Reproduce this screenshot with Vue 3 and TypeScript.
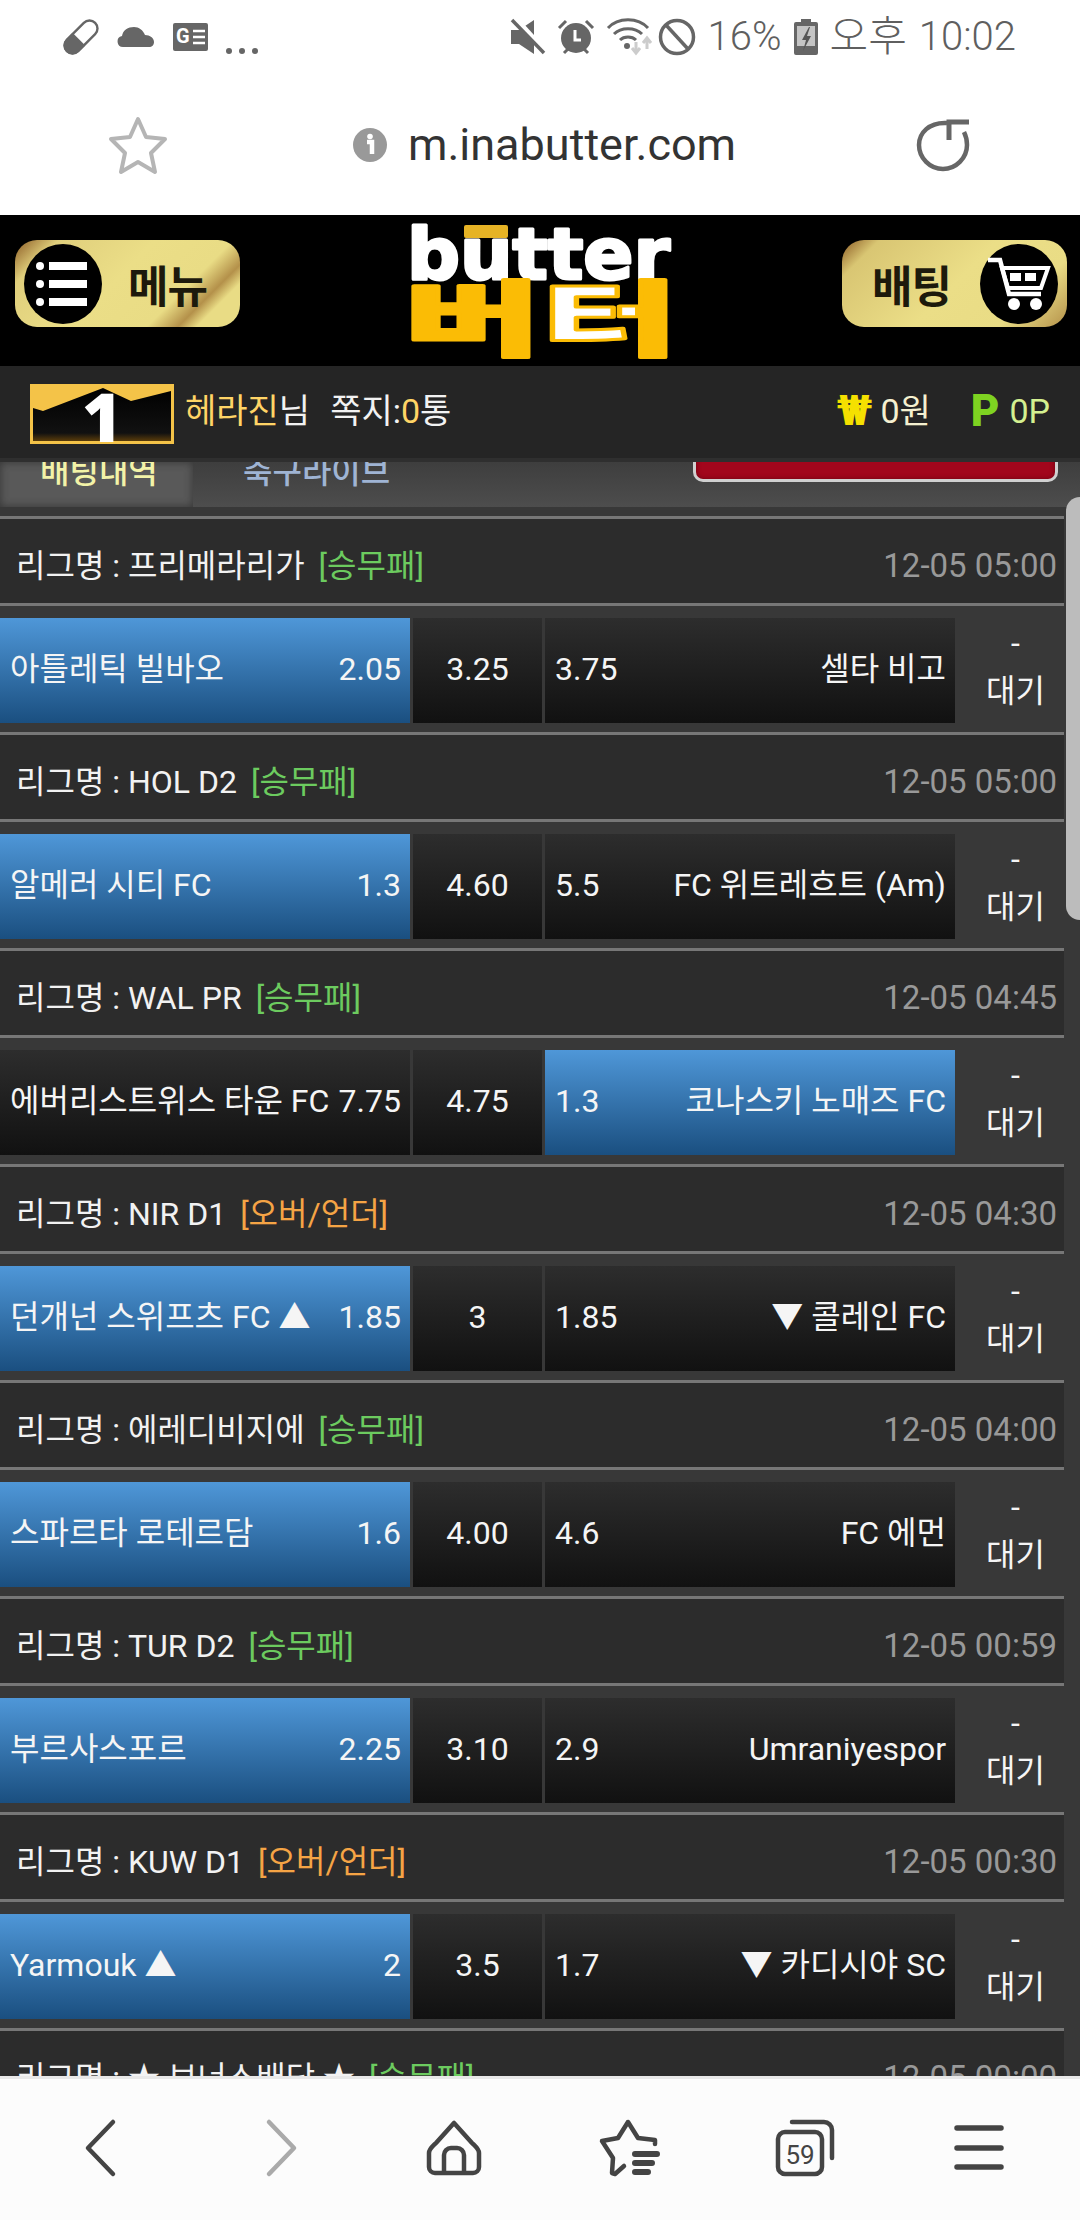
<script setup lang="ts">
interface Game {
  league: string;
  kind: string;
  time: string;
  home: string;
  homeOdds: string;
  draw: string;
  awayOdds: string;
  away: string;
  picked: 'home' | 'away';
}

const games: Game[] = [
  { league: '프리메라리가', kind: '승무패', time: '12-05 05:00', home: '아틀레틱 빌바오', homeOdds: '2.05', draw: '3.25', awayOdds: '3.75', away: '셀타 비고', picked: 'home' },
  { league: 'HOL D2', kind: '승무패', time: '12-05 05:00', home: '알메러 시티 FC', homeOdds: '1.3', draw: '4.60', awayOdds: '5.5', away: 'FC 위트레흐트 (Am)', picked: 'home' },
  { league: 'WAL PR', kind: '승무패', time: '12-05 04:45', home: '에버리스트위스 타운 FC', homeOdds: '7.75', draw: '4.75', awayOdds: '1.3', away: '코나스키 노매즈 FC', picked: 'away' },
  { league: 'NIR D1', kind: '오버/언더', time: '12-05 04:30', home: '던개넌 스위프츠 FC ▲', homeOdds: '1.85', draw: '3', awayOdds: '1.85', away: '▼ 콜레인 FC', picked: 'home' },
  { league: '에레디비지에', kind: '승무패', time: '12-05 04:00', home: '스파르타 로테르담', homeOdds: '1.6', draw: '4.00', awayOdds: '4.6', away: 'FC 에먼', picked: 'home' },
  { league: 'TUR D2', kind: '승무패', time: '12-05 00:59', home: '부르사스포르', homeOdds: '2.25', draw: '3.10', awayOdds: '2.9', away: 'Umraniyespor', picked: 'home' },
  { league: 'KUW D1', kind: '오버/언더', time: '12-05 00:30', home: 'Yarmouk ▲', homeOdds: '2', draw: '3.5', awayOdds: '1.7', away: '▼ 카디시야 SC', picked: 'home' },
  { league: '★ 보너스배당 ★', kind: '승무패', time: '12-05 00:00', home: '', homeOdds: '', draw: '', awayOdds: '', away: '', picked: 'home' },
];
</script>

<template>
  <div class="phone">
    <div class="status-bar">
      <div class="status-left">
        <svg width="36" height="36" viewBox="0 0 36 36">
          <g transform="rotate(-45 18 18)">
            <rect x="-2" y="10" width="40" height="16" rx="8" fill="none" stroke="#666" stroke-width="2.400" />
            <path d="M15 9H6a9 9 0 0 0 0 18h9z" fill="#666" />
          </g>
        </svg>
        <svg width="38" height="22" viewBox="0 0 38 22">
          <path d="M6 21a5.500 5.500 0 0 1-1-10.900C6 4 11 1 17 1c5 0 9 3 11 8 5 0 9 3 9 7 0 3-2 5-5 5z" fill="#666" />
        </svg>
        <svg width="35" height="28" viewBox="0 0 35 28">
          <rect width="35" height="28" rx="2" fill="#666" />
          <text x="3" y="20" class="news-g">G</text>
          <path d="M20 8h12M20 14h12M20 20h12" stroke="#fff" stroke-width="2.500" />
        </svg>
        <span class="more-dots"><i></i><i></i><i></i></span>
      </div>
      <div class="status-right">
        <svg width="35" height="36" viewBox="0 0 35 36">
          <path d="M0 11h8L23 1v34L8 25H0z" fill="#666" />
          <path d="M5 0l30 33" stroke="#fff" stroke-width="5" />
          <path d="M1 1l32 33" stroke="#666" stroke-width="3.500" />
        </svg>
        <svg width="36" height="36" viewBox="0 0 36 36">
          <circle cx="18" cy="19" r="15" fill="#666" />
          <path d="M17 11v10h6" stroke="#fff" stroke-width="3" fill="none" />
          <path d="M1 9l7-7M35 9l-7-7M6 34l4-4M30 34l-4-4" stroke="#666" stroke-width="3" />
        </svg>
        <svg class="wifi" width="48" height="38" viewBox="0 0 48 38">
          <path d="M2 10c10-11 30-11 40 0M8 16c7-7 21-7 28 0M14 22c4-4 12-4 16 0" fill="none" stroke="#666" stroke-width="3" />
          <circle cx="21" cy="28" r="3" fill="#666" />
          <path d="M30 24v10M26 30l4 5 4-5" fill="none" stroke="#ccc" stroke-width="3" />
          <path d="M41 31V20M37 25l4-5 4 5" fill="none" stroke="#ccc" stroke-width="3" />
        </svg>
        <svg width="38" height="38" viewBox="0 0 38 38">
          <circle cx="19" cy="19" r="16.500" fill="none" stroke="#666" stroke-width="3.500" />
          <path d="M8 7l22 24" stroke="#666" stroke-width="3.500" />
        </svg>
        <span class="status-text">16%</span>
        <svg width="24" height="36" viewBox="0 0 24 36">
          <path d="M7 0h10v3h5a2 2 0 0 1 2 2v29a2 2 0 0 1-2 2H2a2 2 0 0 1-2-2V5a2 2 0 0 1 2-2h5z" fill="#666" />
          <rect x="3" y="7" width="18" height="20" fill="#c4c4c4" />
          <path d="M15 8l-7 13h4l-3 11 8-15h-4l3-9z" fill="#555" />
        </svg>
        <span class="status-text ko">오후</span>
        <span class="status-text">10:02</span>
      </div>
    </div>

    <div class="address-bar">
      <svg width="60" height="58" viewBox="0 0 60 58">
        <path d="M30 3l8 18 19 2-14 14 4 19-17-10-17 10 4-19L3 23l19-2z" fill="none" stroke="#b5b5b5" stroke-width="4" stroke-linejoin="round" />
      </svg>
      <div class="url">
        <svg width="34" height="34" viewBox="0 0 34 34">
          <circle cx="17" cy="17" r="17" fill="#999" />
          <path d="M14 14h5v12" fill="none" stroke="#fff" stroke-width="4.500" />
          <circle cx="17" cy="8.500" r="2.800" fill="#fff" />
        </svg>
        <span>m.inabutter.com</span>
      </div>
      <svg class="reload" width="54" height="54" viewBox="0 0 54 54">
        <path d="M31 5C13 4 3 15 3 27c0 13 11 24 24 24s24-11 24-24c0-5-1-9-3-13" fill="none" stroke="#666" stroke-width="4.500" />
        <path d="M53 4H33v18" fill="none" stroke="#666" stroke-width="5" />
      </svg>
    </div>

    <header class="site-header">
      <button class="gold-btn menu-btn">
        <span class="gold-circle">
          <svg width="56" height="50" viewBox="0 0 56 50">
            <circle cx="5" cy="7" r="4" fill="#fff" />
            <circle cx="5" cy="25" r="4" fill="#fff" />
            <circle cx="5" cy="43" r="4" fill="#fff" />
            <path d="M14 7h38M14 25h38M14 43h38" stroke="#fff" stroke-width="8" />
          </svg>
        </span>
        <span class="gold-label">메뉴</span>
      </button>

      <svg class="logo" width="262" height="135" viewBox="0 0 262 135">
        <defs>
          <linearGradient id="logoFill" gradientUnits="userSpaceOnUse" x1="0" y1="0" x2="262" y2="0">
            <stop offset="0.5" stop-color="#fbbc05" />
            <stop offset="0.5" stop-color="#fff" />
            <stop offset="0.86" stop-color="#fff" />
            <stop offset="0.86" stop-color="#fbbc05" />
          </linearGradient>
        </defs>
        <text x="-3" y="54" textLength="263" lengthAdjust="spacingAndGlyphs" class="logo-en">butter</text>
        <rect x="54" y="0" width="44" height="13" rx="2" fill="#e6b325" />
        <text x="-6" y="124" textLength="274" lengthAdjust="spacingAndGlyphs" class="logo-ko" fill="url(#logoFill)">버터</text>
      </svg>

      <button class="gold-btn bet-btn">
        <span class="gold-label">배팅</span>
        <span class="gold-circle">
          <svg width="66" height="56" viewBox="0 0 66 56">
            <path d="M2 4h12l9 34h32" fill="none" stroke="#fff" stroke-width="4.500" />
            <path d="M16 12h46l-7 20H22z" fill="none" stroke="#fff" stroke-width="4" />
            <rect x="24" y="17" width="11" height="8" fill="#fff" />
            <rect x="39" y="17" width="11" height="8" fill="#fff" />
            <circle cx="28" cy="48" r="6" fill="#fff" />
            <circle cx="50" cy="48" r="6" fill="#fff" />
          </svg>
        </span>
      </button>
    </header>

    <div class="user-bar">
      <svg class="rank" width="144" height="60" viewBox="0 0 144 60">
        <defs>
          <linearGradient id="rankFill" x1="0" y1="0" x2="0" y2="1">
            <stop offset="0" stop-color="#000" />
            <stop offset="0.85" stop-color="#111" />
            <stop offset="1" stop-color="#5a3c0a" />
          </linearGradient>
        </defs>
        <rect width="144" height="60" fill="#f4c348" />
        <path d="M3 24l10 3 60-23 28 13 40-10v50H3z" fill="url(#rankFill)" />
        <text x="72" y="58" class="rank-num">1</text>
      </svg>
      <span class="user-name">헤라진</span><span class="user-text">님</span>
      <span class="user-text memo">쪽지:<em>0</em>통</span>
      <div class="wallet">
        <span class="won-mark">₩</span>
        <span class="won-val">0원</span>
        <span class="point-mark">P</span>
        <span class="point-val">0P</span>
      </div>
    </div>

    <main class="content">
      <div class="tab-strip">
        <div class="tab active"><span>배팅내역</span></div>
        <div class="tab"><span>축구라이브</span></div>
        <div class="clear-btn">전체내역삭제</div>
      </div>

      <div class="game-list">
        <section v-for="g in games" :key="g.league" class="game">
          <div class="league-row">
            <span class="league-name">리그명 : {{ g.league }}</span>
            <span :class="['kind', g.kind === '승무패' ? 'green' : 'orange']">[{{ g.kind }}]</span>
            <span class="game-time">{{ g.time }}</span>
          </div>
          <div class="odds-row">
            <div :class="['cell', 'side', { picked: g.picked === 'home' }]">
              <span>{{ g.home }}</span><span>{{ g.homeOdds }}</span>
            </div>
            <div class="cell mid">{{ g.draw }}</div>
            <div :class="['cell', 'side', { picked: g.picked === 'away' }]">
              <span>{{ g.awayOdds }}</span><span>{{ g.away }}</span>
            </div>
            <div class="state"><span>-</span><span>대기</span></div>
          </div>
        </section>
      </div>

      <div class="scroll-thumb"></div>
    </main>

    <nav class="bottom-bar">
      <svg class="nudge-back" width="60" height="60" viewBox="0 0 60 60">
        <path d="M42 4L17 30l25 26" fill="none" stroke="#444" stroke-width="4.500" stroke-linecap="round" stroke-linejoin="round" />
      </svg>
      <svg width="60" height="60" viewBox="0 0 60 60">
        <path d="M20 4l25 26-25 26" fill="none" stroke="#aaa" stroke-width="4.500" stroke-linecap="round" stroke-linejoin="round" />
      </svg>
      <svg width="60" height="60" viewBox="0 0 60 60">
        <path d="M30 5L12 25c-3 3-7 6-7 10v14a6 6 0 0 0 6 6h38a6 6 0 0 0 6-6V35c0-4-4-7-7-10z" fill="none" stroke="#444" stroke-width="4.500" stroke-linejoin="round" />
        <path d="M20 55V37a7 7 0 0 1 7-7h6a7 7 0 0 1 7 7v18" fill="none" stroke="#444" stroke-width="4.500" />
      </svg>
      <svg width="60" height="60" viewBox="0 0 60 60">
        <path d="M56 26v-4l-17-2L29 4 19 20 3 23l11 17-1 15 3 1 9-8" fill="none" stroke="#444" stroke-width="4.500" stroke-linecap="round" stroke-linejoin="round" />
        <path d="M36 36h22M36 45h17M36 54h13" stroke="#444" stroke-width="6" stroke-linecap="round" />
      </svg>
      <svg class="nudge-tabs" width="62" height="60" viewBox="0 0 62 60">
        <rect x="3" y="14" width="44" height="42" rx="7" fill="none" stroke="#444" stroke-width="4.500" />
        <path d="M17 4h32a8 8 0 0 1 8 8v28" fill="none" stroke="#444" stroke-width="4.500" stroke-linecap="round" />
        <text x="25" y="46" class="tab-count">59</text>
      </svg>
      <svg width="60" height="60" viewBox="0 0 60 60">
        <path d="M8 10h44M8 30h44M8 49h44" stroke="#444" stroke-width="5.500" stroke-linecap="round" />
      </svg>
    </nav>
  </div>
</template>

<style>
html,
body {
  margin: 0;
  background: #fff;
}
</style>

<style scoped>
.phone {
  width: 1080px;
  height: 2220px;
  display: flex;
  flex-direction: column;
  overflow: hidden;
  font-family: Roboto, "Noto Sans CJK KR", sans-serif;
  background: #fff;
}

svg {
  overflow: visible;
}

.status-bar {
  height: 74px;
  flex: none;
  display: flex;
  align-items: center;
  justify-content: space-between;
  padding: 0 64px 0 63px;
}

.status-left,
.status-right {
  display: flex;
  align-items: center;
}

.status-left {
  gap: 18px;
}

.status-right {
  gap: 12px;
}

.news-g {
  font: 700 20px Roboto, sans-serif;
  fill: #fff;
}

.more-dots {
  display: flex;
  gap: 7px;
  margin-top: 28px;
}

.more-dots i {
  width: 6px;
  height: 6px;
  border-radius: 50%;
  background: #666;
}

.wifi {
  margin-right: -8px;
}

.status-text {
  font-size: 40px;
  font-weight: 300;
  color: #5f5f5f;
  line-height: 1;
}

.status-text.ko {
  font-size: 42px;
}

.address-bar {
  height: 141px;
  flex: none;
  display: flex;
  align-items: center;
  padding: 0 110px 0 108px;
}

.url {
  display: flex;
  align-items: center;
  gap: 21px;
  margin-left: 185px;
  font-size: 45px;
  color: #333;
}

.reload {
  margin-left: auto;
}

.site-header {
  height: 151px;
  flex: none;
  background: #000;
  display: flex;
  align-items: flex-start;
  justify-content: space-between;
  padding: 0 13px 0 15px;
  position: relative;
}

.gold-btn {
  width: 225px;
  height: 87px;
  margin-top: 25px;
  padding: 0 9px;
  border: 0;
  border-radius: 22px;
  background: linear-gradient(135deg, #8a5a24 0%, #e0cf7c 14%, #ebde87 45%, #e9dc85 70%, #b4914a 80%, #e9dc85 86%);
  display: flex;
  align-items: center;
  font-family: "Noto Sans CJK KR", sans-serif;
}

.bet-btn {
  background: linear-gradient(135deg, #8a5a24 0%, #d9c673 12%, #ebde87 50%, #e9dc85 78%, #b4914a 100%);
  justify-content: space-between;
  padding-left: 30px;
}

.gold-circle {
  width: 78px;
  height: 80px;
  border-radius: 50%;
  background: #000;
  display: flex;
  align-items: center;
  justify-content: center;
  flex: none;
}

.gold-label {
  font-size: 44px;
  font-weight: 700;
  color: #1d1a0c;
  margin-left: 26px;
  letter-spacing: -1px;
}

.bet-btn .gold-label {
  margin-left: 0;
}

.logo {
  margin-top: 10px;
  flex: none;
}

.logo-en {
  font: 700 71px "DejaVu Sans", sans-serif;
  fill: #fff;
  stroke: #fff;
  stroke-width: 3px;
  stroke-linejoin: round;
}

.logo-ko {
  font: 900 82px "Noto Sans CJK KR", sans-serif;
  stroke: #fbbc05;
  stroke-width: 3px;
  stroke-linejoin: round;
}

.user-bar {
  height: 92px;
  flex: none;
  border-bottom: 4px solid #2f2f2f;
  background: #252525;
  display: flex;
  align-items: center;
  padding: 0 30px;
  font-size: 34px;
  line-height: 40px;
  color: #f2f2f2;
}

.rank {
  margin-right: 11px;
  margin-top: 4px;
  flex: none;
}

.rank-num {
  font: 900 68px "Open Sans", sans-serif;
  fill: #fff;
  text-anchor: middle;
}

.user-name,
.user-text,
.wallet {
  margin-bottom: 3px;
}

.user-name {
  color: #ffd466;
}

.memo {
  margin-left: 20px;
}

.memo em {
  font-style: normal;
  color: #ffd466;
}

.wallet {
  margin-left: auto;
  display: flex;
  align-items: center;
}

.won-mark {
  font-size: 42px;
  font-weight: 900;
  color: #f5e000;
  margin-right: 8px;
  margin-left: -6px;
}

.won-val {
  color: #f5f0d0;
}

.point-mark {
  font-size: 44px;
  font-weight: 900;
  color: #7ed321;
  margin-left: 40px;
  margin-right: 10px;
}

.point-val {
  color: #d4f090;
}

.content {
  flex: 1;
  min-height: 0;
  position: relative;
  overflow: hidden;
  background: #383838;
}

.tab-strip {
  height: 45px;
  display: flex;
  align-items: flex-end;
  overflow: hidden;
  background: linear-gradient(#3e3e3e, #4d4d4d);
  margin-bottom: 9px;
}

.tab {
  width: 193px;
  height: 45px;
  font-size: 32px;
  font-weight: 500;
  color: #9fb4d4;
  position: relative;
}

.tab span {
  position: absolute;
  left: 50px;
  bottom: 13px;
  line-height: 44px;
  white-space: nowrap;
}

.tab.active {
  background: #595959;
  color: #f3f3a8;
  box-shadow: inset 0 0 8px #333;
}

.tab.active span {
  left: 40px;
}

.clear-btn {
  margin: 0 22px 25px auto;
  width: 365px;
  height: 80px;
  box-sizing: border-box;
  flex: none;
  border: 3px solid #d0d0d0;
  border-top: 0;
  border-radius: 0 0 10px 10px;
  background: #a2061c;
  box-shadow: inset 0 0 5px #6d0312;
  color: #fff;
  font-size: 30px;
  line-height: 44px;
  text-align: center;
  padding-top: 24px;
  align-self: flex-end;
}

.game {
  height: 216px;
}

.league-row {
  width: 1064px;
  height: 90px;
  box-sizing: border-box;
  border-top: 3px solid #777;
  border-bottom: 3px solid #777;
  background: #2c2c2c;
  display: flex;
  align-items: center;
  padding: 9px 7px 0 16px;
  font-size: 32px;
  line-height: 40px;
  color: #f2f2f2;
}

.kind {
  margin-left: 14px;
}

.green {
  color: #6ccb5f;
}

.orange {
  color: #f5a445;
}

.game-time {
  margin-left: auto;
  font-size: 33px;
  color: #999;
}

.odds-row {
  display: grid;
  grid-template-columns: 410px 129px 410px 118px;
  column-gap: 3px;
  height: 105px;
  margin-top: 12px;
  width: 1073px;
  font-size: 32px;
  line-height: 40px;
  color: #f5f5f5;
}

.cell {
  background: linear-gradient(#2d2d2d, #111);
  display: flex;
  align-items: center;
  white-space: nowrap;
  padding-bottom: 3px;
  box-sizing: border-box;
}

.mid {
  justify-content: center;
}

.side {
  justify-content: space-between;
  padding: 0 9px 3px 10px;
}

.side.picked {
  background: linear-gradient(#4f97d8, #1a4f80);
}

.state {
  margin-left: -3px;
  display: flex;
  flex-direction: column;
  align-items: center;
  justify-content: center;
  line-height: 48px;
  padding-bottom: 8px;
}

.scroll-thumb {
  position: absolute;
  top: 35px;
  right: 0;
  width: 14px;
  height: 423px;
  background: #bcbcbc;
  border-radius: 14px 0 0 14px;
}

.bottom-bar {
  height: 144px;
  flex: none;
  box-sizing: border-box;
  border-top: 3px solid #e8e8e8;
  background: #fcfcfc;
  display: grid;
  grid-template-columns: repeat(6, 175px);
  justify-items: center;
  align-items: center;
  padding: 0 0 3px 16px;
}

.nudge-back {
  margin-left: -6px;
}

.nudge-tabs {
  margin-left: 4px;
}

.tab-count {
  font: 400 26px Roboto, sans-serif;
  fill: #444;
  text-anchor: middle;
}
</style>
